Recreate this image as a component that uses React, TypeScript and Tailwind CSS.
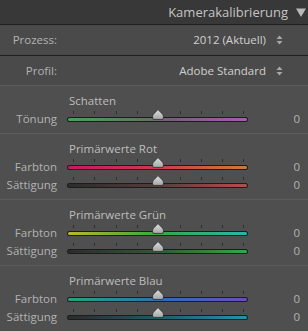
import React from "react";

const font = { fontFamily: '"Open Sans", "Noto Sans", sans-serif' };

function Thumb() {
  return (
    <svg width="12" height="11" viewBox="0 0 12 11" className="absolute" style={{ left: 85, top: -8 }}>
      <defs>
        <linearGradient id="tg" x1="0" y1="0" x2="0" y2="1">
          <stop offset="0" stopColor="#dedede" />
          <stop offset="1" stopColor="#a6a6a6" />
        </linearGradient>
      </defs>
      <path
        d="M6 0.6 L10.6 5.2 Q11.4 6 11.4 7.2 L11.4 9 Q11.4 10.4 10 10.4 L2 10.4 Q0.6 10.4 0.6 9 L0.6 7.2 Q0.6 6 1.4 5.2 Z"
        fill="url(#tg)"
        stroke="#2a2a2a"
        strokeWidth="0.8"
      />
    </svg>
  );
}

function Slider({ label, gradient }: { label: string; gradient: string }) {
  const ticks = [6, 27, 49, 70, 113, 134, 155, 176];
  return (
    <div className="flex h-[18px] items-center">
      <div className="w-[57px] text-right text-[11.5px] text-[#b2b2b2] leading-none">{label}</div>
      <div className="relative ml-[10px] h-[5px] w-[181px] rounded-full bg-[#1c1c1c] p-[1px]">
        {ticks.map((t) => (
          <div key={t} className="absolute top-[-6px] h-[3px] w-[1px] bg-[#2e2e2e]" style={{ left: t }} />
        ))}
        <div className="h-[3px] w-full rounded-full" style={{ background: gradient }} />
        <Thumb />
      </div>
      <div className="ml-auto pr-[8px] text-[11.5px] text-[#b2b2b2] leading-none">0</div>
    </div>
  );
}

function Section({ title, children, last }: { title: string; children: React.ReactNode; last?: boolean }) {
  return (
    <div className={`pt-[6px] pb-[5px] ${last ? "" : "border-b border-[#5c5c5c]"}`}>
      <div className="flex h-[18px] items-center pl-[69px] text-[11.5px] text-[#bdbdbd] leading-none">{title}</div>
      {children}
    </div>
  );
}

function Updown() {
  return (
    <svg width="7" height="10" viewBox="0 0 7 10" className="ml-[10px]">
      <path d="M3.5 0.5 L6.5 4 L0.5 4 Z" fill="#a8a8a8" />
      <path d="M3.5 9.5 L6.5 6 L0.5 6 Z" fill="#a8a8a8" />
    </svg>
  );
}

export default function App() {
  return (
    <div className="h-[331px] w-[308px] overflow-hidden bg-[#4f4f4f]" style={font}>
      <div className="flex h-[25px] items-center justify-end border-b border-[#1e1e1e] bg-[#383838] pr-[2px]">
        <span className="text-[13px] text-[#c4c4c4] leading-none">Kamerakalibrierung</span>
        <svg width="10" height="9" viewBox="0 0 10 9" className="ml-[8px]">
          <path d="M0 0.5 L10 0.5 L5 9 Z" fill="#b8b8b8" />
        </svg>
      </div>
      <div className="flex h-[31px] items-center border-b border-[#1e1e1e] bg-[#4a4a4a]">
        <div className="w-[57px] text-right text-[11.5px] text-[#b2b2b2] leading-none">Prozess:</div>
        <div className="ml-auto flex items-center pr-[25px] text-[11.5px] text-[#d0d0d0] leading-none">
          2012 (Aktuell)
          <Updown />
        </div>
      </div>
      <div className="flex h-[30px] items-center border-b border-[#5c5c5c] bg-[#4a4a4a]">
        <div className="w-[57px] text-right text-[11.5px] text-[#b2b2b2] leading-none">Profil:</div>
        <div className="ml-auto flex items-center pr-[25px] text-[11.5px] text-[#d0d0d0] leading-none">
          Adobe Standard
          <Updown />
        </div>
      </div>
      <Section title="Schatten">
        <Slider label="Tönung" gradient="linear-gradient(90deg,#4aa255,#5f7560 45%,#765e79 55%,#a85cb0)" />
      </Section>
      <Section title="Primärwerte Rot">
        <Slider label="Farbton" gradient="linear-gradient(90deg,#c81868,#cc3a4a 50%,#d07a34)" />
        <Slider label="Sättigung" gradient="linear-gradient(90deg,#2c2c2c,#573c3c 50%,#b84c4c)" />
      </Section>
      <Section title="Primärwerte Grün">
        <Slider label="Farbton" gradient="linear-gradient(90deg,#bcb624,#34aa42 50%,#24b8ac)" />
        <Slider label="Sättigung" gradient="linear-gradient(90deg,#2c2c2c,#325834 50%,#34a846)" />
      </Section>
      <Section title="Primärwerte Blau" last>
        <Slider label="Farbton" gradient="linear-gradient(90deg,#24a47c,#2e6cb8 55%,#6c4cb8)" />
        <Slider label="Sättigung" gradient="linear-gradient(90deg,#2c2c2c,#22586a 50%,#2492b0)" />
      </Section>
    </div>
  );
}
